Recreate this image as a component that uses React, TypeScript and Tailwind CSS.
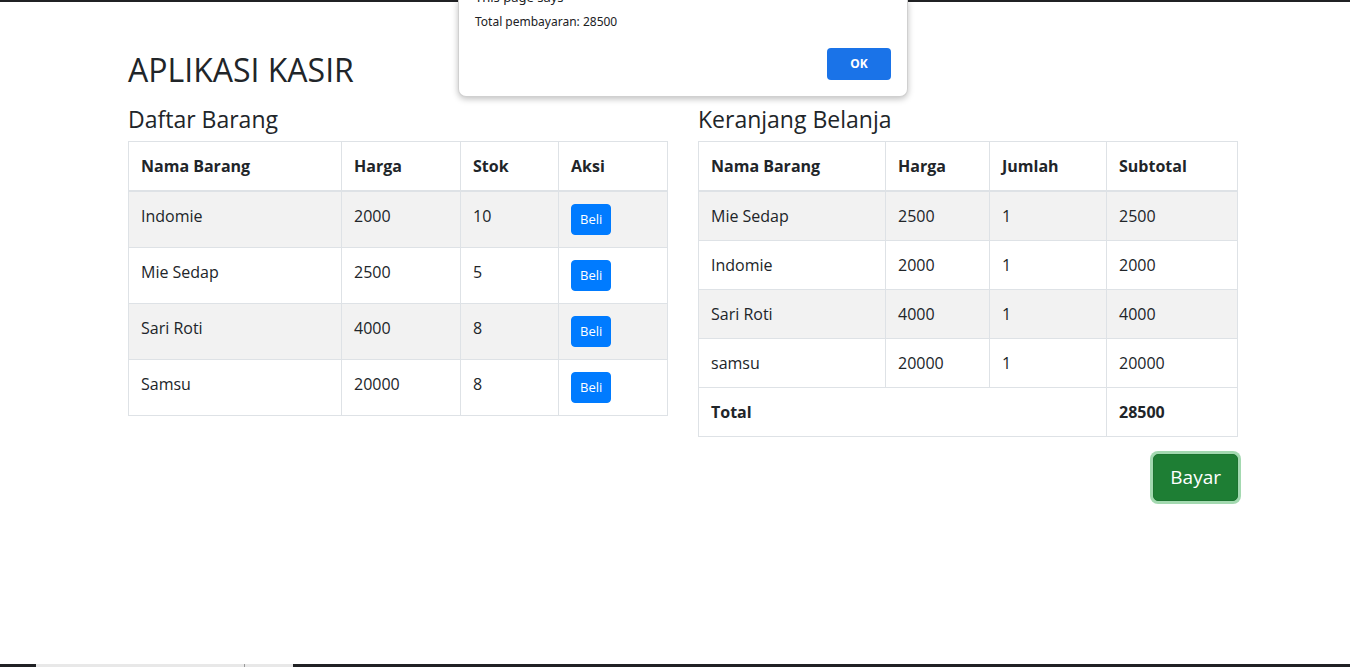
const barang = [
  { nama: "Indomie", harga: 2000, stok: 10 },
  { nama: "Mie Sedap", harga: 2500, stok: 5 },
  { nama: "Sari Roti", harga: 4000, stok: 8 },
  { nama: "Samsu", harga: 20000, stok: 8 },
];

const keranjang = [
  { nama: "Mie Sedap", harga: 2500, jumlah: 1 },
  { nama: "Indomie", harga: 2000, jumlah: 1 },
  { nama: "Sari Roti", harga: 4000, jumlah: 1 },
  { nama: "samsu", harga: 20000, jumlah: 1 },
];

const th = "border border-[#dee2e6] border-b-2 p-3 text-left align-bottom font-bold";
const td = "border border-[#dee2e6] p-3 align-top";

export default function App() {
  const total = keranjang.reduce((sum, item) => sum + item.harga * item.jumlah, 0);

  return (
    <div
      className="relative h-[667px] overflow-hidden bg-white text-[16px] leading-6 text-[#212529]"
      style={{ fontFamily: '"Open Sans", "Noto Sans", sans-serif' }}
    >
      {/* browser frame edges */}
      <div className="absolute left-0 right-0 top-0 h-[2px] bg-[#202124]"></div>
      <div className="absolute bottom-0 left-0 right-0 flex h-[3px] bg-[#202124]">
        <div className="ml-[36px] flex h-full w-[257px] bg-[#e8e8e8]">
          <div className="h-full w-[209px] border-r border-[#9a9a9a]"></div>
        </div>
      </div>

      <div className="ml-[128px] w-[1110px] pt-[48px]">
        <h1 className="mb-2 text-[32px] font-medium leading-[43px]">APLIKASI KASIR</h1>

        <div className="flex gap-[30px]">
          {/* Daftar Barang */}
          <div className="w-[540px]">
            <h3 className="mb-[5px] pt-[3px] text-[23px] font-medium leading-[34px]">Daftar Barang</h3>
            <table className="w-full border-collapse">
              <thead>
                <tr>
                  <th className={`${th} w-[213px]`}>Nama Barang</th>
                  <th className={`${th} w-[119px]`}>Harga</th>
                  <th className={`${th} w-[98px]`}>Stok</th>
                  <th className={th}>Aksi</th>
                </tr>
              </thead>
              <tbody>
                {barang.map((b, i) => (
                  <tr key={b.nama} className={i % 2 === 0 ? "bg-[#f2f2f2]" : ""}>
                    <td className={td}>{b.nama}</td>
                    <td className={td}>{b.harga}</td>
                    <td className={td}>{b.stok}</td>
                    <td className={td}>
                      <button className="rounded-[4px] border border-[#007bff] bg-[#007bff] px-2 py-1 text-[13px] leading-[21px] text-white">
                        Beli
                      </button>
                    </td>
                  </tr>
                ))}
              </tbody>
            </table>
          </div>

          {/* Keranjang Belanja */}
          <div className="w-[540px]">
            <h3 className="mb-[5px] pt-[3px] text-[23px] font-medium leading-[34px]">Keranjang Belanja</h3>
            <table className="w-full border-collapse">
              <thead>
                <tr>
                  <th className={`${th} w-[187px]`}>Nama Barang</th>
                  <th className={`${th} w-[104px]`}>Harga</th>
                  <th className={`${th} w-[117px]`}>Jumlah</th>
                  <th className={th}>Subtotal</th>
                </tr>
              </thead>
              <tbody>
                {keranjang.map((k, i) => (
                  <tr key={k.nama} className={i % 2 === 0 ? "bg-[#f2f2f2]" : ""}>
                    <td className={td}>{k.nama}</td>
                    <td className={td}>{k.harga}</td>
                    <td className={td}>{k.jumlah}</td>
                    <td className={td}>{k.harga * k.jumlah}</td>
                  </tr>
                ))}
                <tr>
                  <td className={`${td} font-bold`} colSpan={3}>
                    Total
                  </td>
                  <td className={`${td} font-bold`}>{total}</td>
                </tr>
              </tbody>
            </table>
            <div className="mt-[17px] flex justify-end">
              <button className="rounded-[5px] border border-[#1c7430] bg-[#1e7e34] px-4 py-2 text-[19px] leading-[29px] text-white shadow-[0_0_0_3px_rgba(72,180,97,0.5)]">
                Bayar
              </button>
            </div>
          </div>
        </div>
      </div>

      {/* alert dialog */}
      <div
        className="absolute left-[458px] top-0 h-[97px] w-[450px] rounded-b-lg border border-t-0 border-[#d0d0d0] bg-white shadow-[0_2px_6px_rgba(0,0,0,0.25)]"
        style={{ fontFamily: '"Noto Sans", "Open Sans", sans-serif' }}
      >
        <div className="px-4 text-[12px] text-[#202124]">
          <div className="-mt-[12px] text-[13px] leading-[18px]">This page says</div>
          <div className="mt-[8px] leading-[16px]">Total pembayaran: 28500</div>
        </div>
        <div className="mt-[18px] flex justify-end pr-[16px]">
          <button className="h-[32px] w-[64px] rounded-[4px] bg-[#1a73e8] text-[12px] font-bold text-white">
            OK
          </button>
        </div>
      </div>
    </div>
  );
}
